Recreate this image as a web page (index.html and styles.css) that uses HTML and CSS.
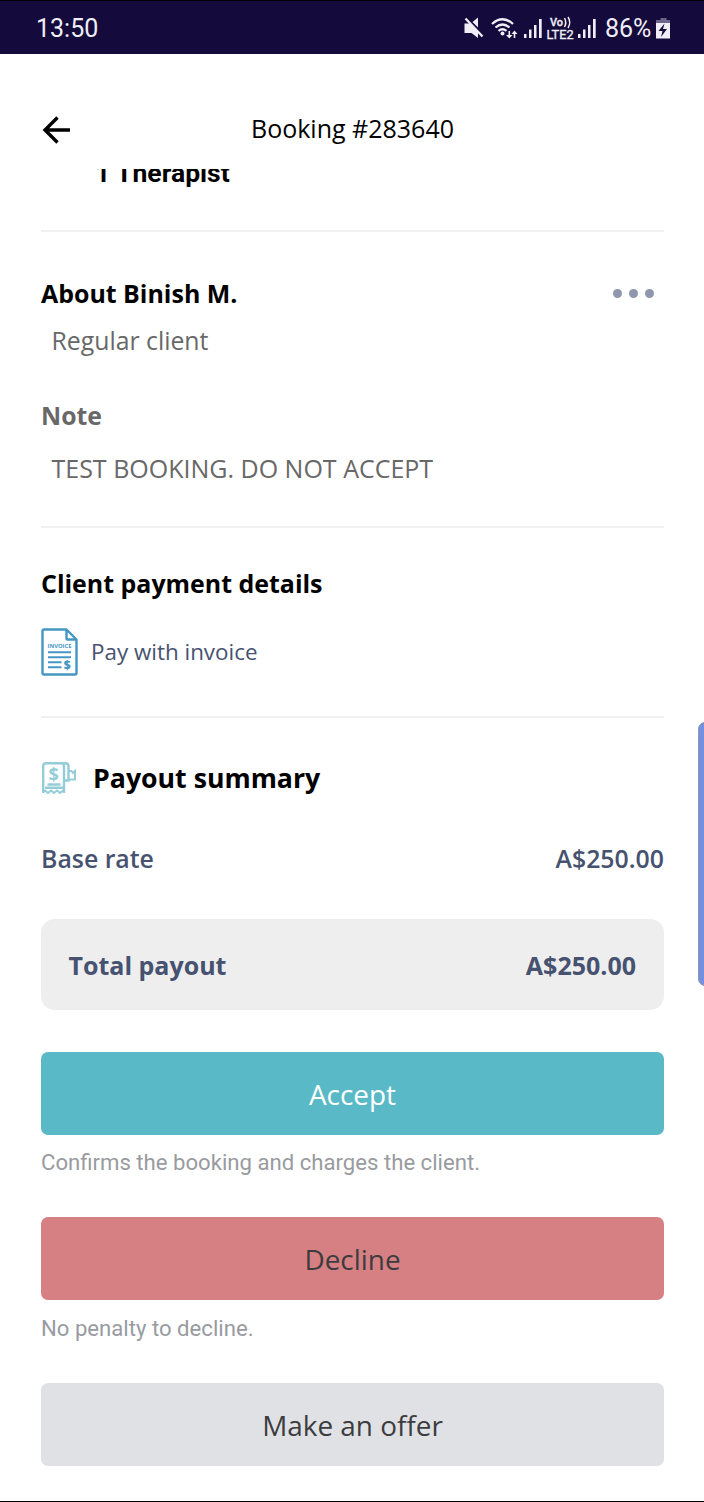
FILE: index.html
```html
<!DOCTYPE html>
<html lang="en">
<head>
<meta charset="utf-8">
<title>Booking #283640</title>
<link rel="stylesheet" href="styles.css">
</head>
<body>
<div class="screen">
  <div class="status">
    <span class="clock">13:50</span>
    <svg class="status-icons" viewBox="0 0 140 40" width="140" height="40">
      <g fill="#f0eef6">
        <path d="M4.500 14.500h5l8.500 8.500v6l-6.500-5h-7zM12.500 13l5.500-4.500v10z"/>
        <circle cx="42.500" cy="24.500" r="2"/>
        <path d="M46 26h2.500v-4h1.600v4h2.500l-3.300 3.500zM51.500 25h2.200v4h1.600v-4h2.200l-3-3.500z"/>
        <path d="M64 25h2.500v4H64zM69 20.500h2.500V29H69zM74 16h2.500v13H74zM79 10h2.700v19H79z"/>
        <path d="M118 25h2.500v4H118zM123 20.500h2.500V29H123zM128 16h2.500v13H128zM133 10h2.700v19H133z"/>
      </g>
      <path d="M5.500 9.500l17 18" stroke="#f0eef6" stroke-width="2.300"/>
      <g fill="none" stroke="#f0eef6" stroke-width="2.300">
        <path d="M32 15q10.500-9.500 21 0M35.500 18.500q7-6 14 0M38.500 21.800q4-3 8 0"/>
      </g>
      <text class="lte" x="90" y="17" textLength="13" lengthAdjust="spacingAndGlyphs">Vo</text>
      <path d="M104.500 9q2.500 4.500 0 9M108 8q3.500 5.500 0 11" fill="none" stroke="#f0eef6" stroke-width="1.500"/>
      <text class="lte lte-band" x="86.500" y="29.500" textLength="27" lengthAdjust="spacingAndGlyphs">LTE2</text>
    </svg>
    <span class="percent">86%</span>
    <svg class="battery" viewBox="0 0 14 22" width="14" height="22">
      <path d="M4.500 0h6v2H14v4H0V2h4.500z" fill="#6c668c"/>
      <path d="M0 5h14v15.500H0z" fill="#f0eef6"/>
      <path d="M8.500 5.500L2.500 13h4l-1.500 6 6-8H7z" fill="#140b3c"/>
    </svg>
  </div>

  <header class="header">
    <svg class="back" viewBox="0 0 30 30" width="30" height="30">
      <path d="M16.500 2.500L4 15l12.500 12.500M4 15h25" fill="none" stroke="#000" stroke-width="3.400"/>
    </svg>
    <h1 class="title">Booking #283640</h1>
  </header>

  <main class="content">
    <section class="section therapist"><p class="line count">1 Therapist</p></section>

    <section class="section about">
      <div class="row">
        <h2 class="line heading">About Binish M.</h2>
        <div class="more"><i class="dot"></i><i class="dot"></i><i class="dot"></i></div>
      </div>
      <p class="line muted regular">Regular client</p>
      <h3 class="line note-label">Note</h3>
      <p class="line muted note">TEST BOOKING. DO NOT ACCEPT</p>
    </section>

    <section class="section payment">
      <h2 class="line heading">Client payment details</h2>
      <div class="method">
        <svg viewBox="0 0 37 48" width="37" height="48">
          <path d="M3 1.500h22.500l10 10V45a1.500 1.500 0 0 1-1.500 1.500H3A1.500 1.500 0 0 1 1.500 45V3A1.500 1.500 0 0 1 3 1.500zM25.500 2v8.500q0 1 1 1h9" fill="#fff" stroke="#4596c4" stroke-width="2.400" stroke-linejoin="round"/>
          <path d="M7 24.300h23M7 29.300h23M7 34.300h13.500M7 39.300h13.500" stroke="#4596c4" stroke-width="2"/>
          <text class="invoice" x="6.500" y="20" textLength="24" lengthAdjust="spacingAndGlyphs">INVOICE</text>
          <text class="dollar" x="22.700" y="40.500">$</text>
        </svg>
        <span class="line pay">Pay with invoice</span>
      </div>
    </section>

    <section class="payout">
      <div class="payout-head">
        <svg viewBox="0 0 36 34" width="36" height="34">
          <g fill="none" stroke="#94cdd8" stroke-width="2.400">
            <path d="M2.200 32V5q0-2.800 3-2.800h19q3.300 0 3.300 3V19.500h-4.500M23 32V6q0-3-2-4"/>
            <path d="M27.500 10h3l1.500 2 2-2v8.500h-6.500" stroke-width="2"/>
            <path d="M6.500 23.500h13M4 26.700h18" stroke-width="2.600"/>
            <path d="M2 31l2-1.500L7 32l3-2.500 3 2.500 3-2.500 3 2.500 3-2.500 1.500 1.500" stroke-width="2"/>
          </g>
          <text class="receipt-dollar" x="7.500" y="19.500">$</text>
        </svg>
        <h2 class="line payout-title">Payout summary</h2>
      </div>
      <div class="row base"><span class="line">Base rate</span><span class="line">A$250.00</span></div>
      <div class="row total"><span class="line">Total payout</span><span class="line">A$250.00</span></div>
    </section>

    <div class="actions">
      <button class="button accept">Accept</button>
      <p class="line hint confirm">Confirms the booking and charges the client.</p>
      <button class="button decline">Decline</button>
      <p class="line hint penalty">No penalty to decline.</p>
      <button class="button offer">Make an offer</button>
    </div>
  </main>
  <div class="edge-panel"></div>
</div>
</body>
</html>
```
FILE: styles.css
```css
* { box-sizing: border-box; }
body { margin: 0; background: #fff; }
h1, h2, h3, p { margin: 0; }
svg { display: block; flex: none; }

.screen {
  position: relative;
  display: flex;
  flex-direction: column;
  width: 704px;
  height: 1502px;
  overflow: hidden;
  border-bottom: 1px solid #000;
  background: #fff;
  font-family: "Open Sans", sans-serif;
  color: #000;
}

.status {
  display: flex;
  align-items: center;
  flex: none;
  height: 54px;
  padding: 2px 34px 0 36px;
  border-top: 1px solid #000;
  background: #140b3c;
  color: #f0eef6;
  font-family: Roboto, sans-serif;
}
.clock { font-size: 25px; }
.status-icons { margin-left: auto; margin-right: 5px; }
.percent { width: 51px; font-size: 25px; white-space: nowrap; }
.battery { flex: none; }
.lte { font: 500 10.500px Roboto, sans-serif; fill: #f0eef6; stroke: #f0eef6; stroke-width: .3px; }
.lte-band { font-size: 12px; font-weight: 400; }

.header {
  display: grid;
  grid-template-columns: 30px 1fr 30px;
  align-items: center;
  align-content: start;
  flex: none;
  height: 115px;
  padding: 58px 41px 0;
}
.title { font-size: 25px; font-weight: 400; line-height: 34px; text-align: center; padding-left: 1px; margin-top: -1px; }
.back { margin-top: 2px; }

.content { flex: 1; min-height: 0; overflow: hidden; padding: 0 40px 0 41px; }
.line { display: block; line-height: 34px; white-space: nowrap; }
.row { display: flex; justify-content: space-between; align-items: center; }
.section { border-bottom: 2px solid #f1f1f1; }

.therapist { display: flex; align-items: flex-start; height: 63px; }
.count { margin-top: -13px; padding-left: 54px; font: 700 26.500px/34px Roboto, sans-serif; }

.about { height: 296px; padding-top: 44px; }
.heading { font-size: 24.950px; font-weight: 700; }
.more { display: flex; gap: 7px; padding-right: 10px; }
.dot { width: 9px; height: 9px; border-radius: 50%; background: #8e97ad; }
.muted { padding-left: 10.500px; font-size: 25px; color: #686868; }
.regular { margin-top: 13px; font-size: 24.800px; }
.note-label { margin-top: 41px; font-size: 24.800px; font-weight: 700; color: #686868; }
.note { margin-top: 19px; }

.payment { height: 190px; padding-top: 38px; }
.method { display: flex; align-items: center; gap: 13px; margin-top: 27.500px; color: #465270; }
.pay { font-size: 22.400px; }
.invoice { font: 700 6px "Open Sans", sans-serif; fill: #4596c4; }
.dollar { font: 800 12px "Open Sans", sans-serif; fill: #4596c4; }

.payout { padding-top: 43px; }
.payout-head { display: flex; gap: 16px; height: 34px; }
.payout-title { font-size: 26.700px; font-weight: 700; }
.receipt-dollar { font: 700 18px "Open Sans", sans-serif; fill: #94cdd8; }
.base { margin-top: 46px; font-size: 24.850px; font-weight: 600; color: #465270; }
.total { height: 91px; margin-top: 44px; padding: 0 28px 0 27.500px; border-radius: 14px; background: #eee; font-size: 25px; font-weight: 700; color: #465270; }

.actions { padding-top: 42px; }
.button {
  display: block;
  width: 100%;
  height: 83px;
  padding: 0;
  border: 0;
  border-radius: 7px;
  font: 400 27.900px/40px "Open Sans", sans-serif;
  color: #3c3c40;
}
.accept { background: #5ab9c6; color: #fff; }
.decline { background: #d78083; }
.offer { background: #e0e1e5; }
.hint { font: 400 22.150px/34px Roboto, sans-serif; color: #989ba0; }
.confirm { margin: 10px 0 38px; }
.penalty { margin: 11px 0 38px; }

.edge-panel {
  position: absolute;
  top: 722px;
  right: -8px;
  width: 14px;
  height: 264px;
  border: 1.500px solid #8e98a8;
  border-radius: 8px;
  background: #7590e2;
}
```
